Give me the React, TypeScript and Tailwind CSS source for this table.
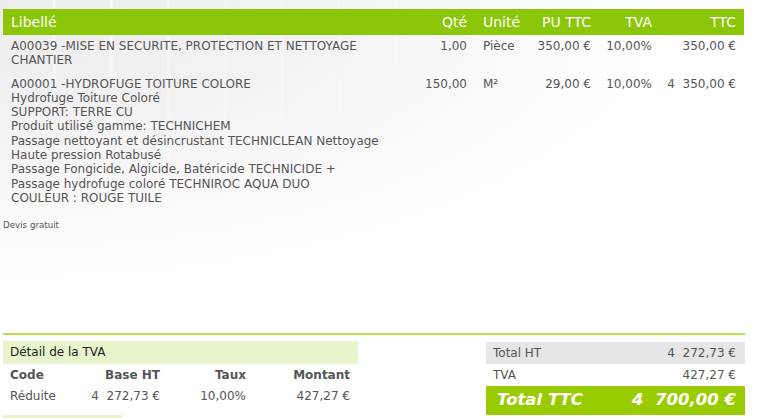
import React from 'react';

const lines = [
    {
        ref: 'A00039 -MISE EN SECURITE, PROTECTION ET NETTOYAGE CHANTIER',
        detail: [] as string[],
        qte: '1,00',
        unite: 'Pièce',
        pu: '350,00 €',
        tva: '10,00%',
        ttc: '350,00 €',
    },
    {
        ref: 'A00001 -HYDROFUGE TOITURE COLORE',
        detail: [
            'Hydrofuge Toiture Coloré',
            'SUPPORT: TERRE CU',
            'Produit utilisé gamme: TECHNICHEM',
            'Passage nettoyant et désincrustant TECHNICLEAN Nettoyage Haute pression Rotabusé',
            'Passage Fongicide, Algicide, Batéricide TECHNICIDE +',
            'Passage hydrofuge coloré TECHNIROC AQUA DUO',
            'COULEUR : ROUGE TUILE',
        ],
        qte: '150,00',
        unite: 'M²',
        pu: '29,00 €',
        tva: '10,00%',
        ttc: '4\u00a0\u00a0350,00 €',
    },
];

const cols = 'grid grid-cols-[417px_50px_60px_64px_61px_89px]';

export default function App() {
    return (
        <div className="relative w-[757px] h-[418px] overflow-hidden bg-white font-['DejaVu_Sans',sans-serif] text-[12px] text-[#555]">
            {/* watermark background */}
            <div className="absolute left-0 top-0 w-[700px] h-[280px] bg-[radial-gradient(ellipse_95%_100%_at_0%_0%,#ededed_0%,#f2f2f2_45%,rgba(255,255,255,0)_100%)]" />
            <div className="absolute left-0 top-0 w-[700px] h-[280px] bg-[repeating-linear-gradient(90deg,rgba(255,255,255,0)_0px,rgba(255,255,255,0)_52px,rgba(255,255,255,0.8)_54px,rgba(255,255,255,0)_57px)] [mask-image:radial-gradient(ellipse_95%_100%_at_0%_0%,black_0%,transparent_90%)]" />

            <div className="relative pt-[9px] px-[3px]">
                {/* Lines table */}
                <div className="w-[741px]">
                    <div className={`${cols} h-[26px] items-center bg-[#8cc608] text-white text-[14px]`}>
                        <div className="pl-[8px]">Libellé</div>
                        <div className="text-right pr-[3px]">Qté</div>
                        <div className="pl-[13px]">Unité</div>
                        <div className="text-right pr-[3px]">PU TTC</div>
                        <div className="text-right pr-[3px]">TVA</div>
                        <div className="text-right pr-[8px]">TTC</div>
                    </div>
                    <div className="pt-[1px]">
                        {lines.map((l) => (
                            <div key={l.ref} className={`${cols} leading-[14.3px] py-[3px] mb-[3px]`}>
                                <div className="pl-[8px] pr-[20px]">
                                    <div>{l.ref}</div>
                                    {l.detail.map((d) => (
                                        <div key={d}>{d}</div>
                                    ))}
                                </div>
                                <div className="text-right pr-[3px]">{l.qte}</div>
                                <div className="pl-[13px]">{l.unite}</div>
                                <div className="text-right pr-[3px]">{l.pu}</div>
                                <div className="text-right pr-[3px]">{l.tva}</div>
                                <div className="text-right pr-[8px] whitespace-pre">{l.ttc}</div>
                            </div>
                        ))}
                    </div>
                </div>

                <div className="mt-[13px] text-[8.7px] text-[#555] leading-none">Devis gratuit</div>

                {/* Footer */}
                <div className="mt-[103px] h-[2px] w-[742px] bg-[#b6e04e]" />
                <div className="flex justify-between w-[742px] mt-[6px]">
                    <div className="w-[355px]">
                        <div className="h-[23px] flex items-center pl-[7px] bg-[#e8f5cc] text-[#222]">Détail de la TVA</div>
                        <div className="grid grid-cols-[60px_97px_86px_104px] font-bold h-[22px] items-center">
                            <div className="pl-[7px]">Code</div>
                            <div className="text-right">Base HT</div>
                            <div className="text-right">Taux</div>
                            <div className="text-right">Montant</div>
                        </div>
                        <div className="grid grid-cols-[60px_97px_86px_104px] h-[20px] items-center">
                            <div className="pl-[7px]">Réduite</div>
                            <div className="text-right whitespace-pre">4{'\u00a0\u00a0'}272,73 €</div>
                            <div className="text-right">10,00%</div>
                            <div className="text-right">427,27 €</div>
                        </div>
                        <div className="mt-[9px] h-[10px] w-[119px] bg-[#e8f5cc]" />
                    </div>
                    <div className="w-[259px] mt-[1px]">
                        <div className="h-[22px] flex items-center justify-between px-[7px] pr-[9px] bg-[#e6e6e6]">
                            <span>Total HT</span>
                            <span className="whitespace-pre">4{'\u00a0\u00a0'}272,73 €</span>
                        </div>
                        <div className="h-[22px] flex items-center justify-between px-[7px] pr-[9px]">
                            <span>TVA</span>
                            <span>427,27 €</span>
                        </div>
                        <div className="h-[29px] flex items-center justify-between pl-[11px] pr-[9px] bg-[#99cc00] text-white font-bold italic text-[16.5px]">
                            <span>Total TTC</span>
                            <span className="whitespace-pre">4{'\u00a0\u00a0'}700,00 €</span>
                        </div>
                    </div>
                </div>
            </div>
        </div>
    );
}
